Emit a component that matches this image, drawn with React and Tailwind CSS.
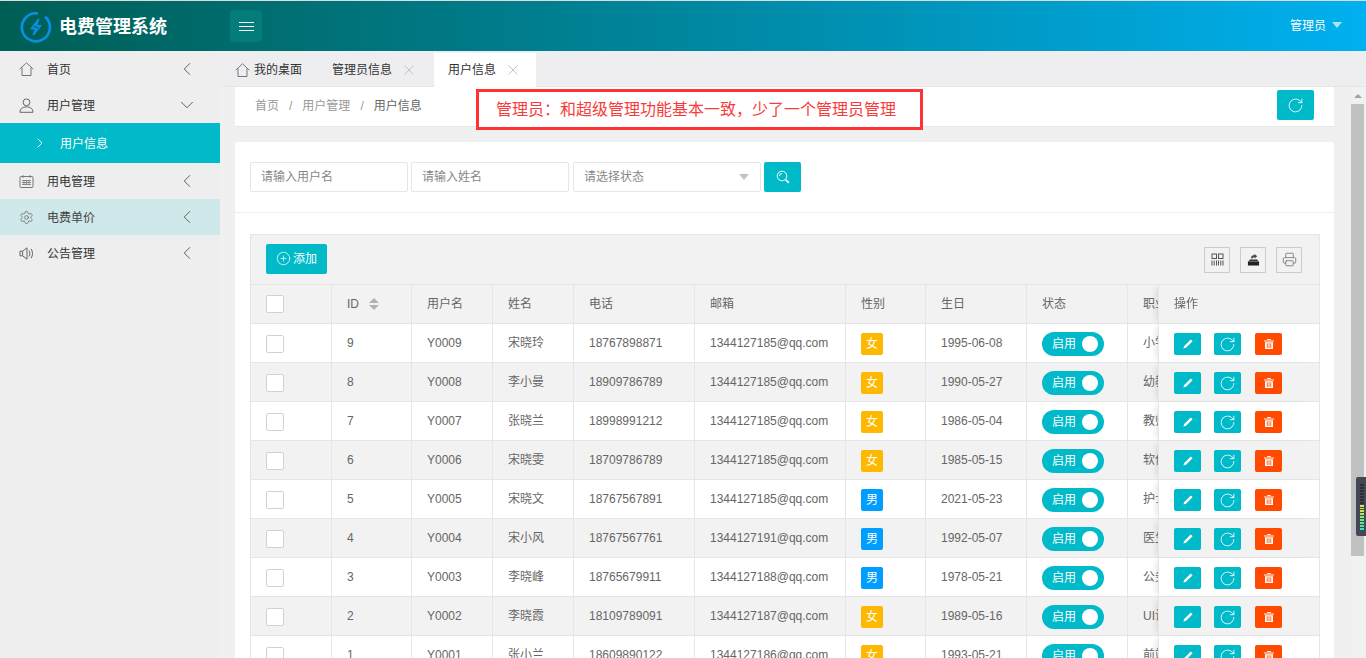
import React from 'react';
import { ChevronLeft, ChevronDown, ChevronRight, Settings, RotateCw, Printer, CirclePlus } from 'lucide-react';

const users = [
  { id: 9, username: 'Y0009', name: '宋晓玲', phone: '18767898871', email: '1344127185@qq.com', sex: '女', birth: '1995-06-08', job: '小学老师' },
  { id: 8, username: 'Y0008', name: '李小曼', phone: '18909786789', email: '1344127185@qq.com', sex: '女', birth: '1990-05-27', job: '幼教老师' },
  { id: 7, username: 'Y0007', name: '张晓兰', phone: '18998991212', email: '1344127185@qq.com', sex: '女', birth: '1986-05-04', job: '教师' },
  { id: 6, username: 'Y0006', name: '宋晓雯', phone: '18709786789', email: '1344127185@qq.com', sex: '女', birth: '1985-05-15', job: '软件工程师' },
  { id: 5, username: 'Y0005', name: '宋晓文', phone: '18767567891', email: '1344127185@qq.com', sex: '男', birth: '2021-05-23', job: '护士' },
  { id: 4, username: 'Y0004', name: '宋小风', phone: '18767567761', email: '1344127191@qq.com', sex: '男', birth: '1992-05-07', job: '医生' },
  { id: 3, username: 'Y0003', name: '李晓峰', phone: '18765679911', email: '1344127188@qq.com', sex: '男', birth: '1978-05-21', job: '公务员' },
  { id: 2, username: 'Y0002', name: '李晓霞', phone: '18109789091', email: '1344127187@qq.com', sex: '女', birth: '1989-05-16', job: 'UI设计师' },
  { id: 1, username: 'Y0001', name: '张小兰', phone: '18609890122', email: '1344127186@qq.com', sex: '女', birth: '1993-05-21', job: '前端工程师' },
];

const columns = [81, 80, 81, 81, 121, 151, 80, 101, 101, 131, 161];

const meter = ['#2b2f38', '#2b2f38', '#2b2f38', '#2b2f38', '#2b2f38', '#2b2f38', '#2b2f38', '#e4e04a', '#dfe24e', '#c9e354', '#a9e65e', '#8ee86c', '#6fe97e', '#55e88f', '#45e5a0', '#3fe3ab'];

function Logo() {
  return (
    <svg width="32" height="32" viewBox="0 0 32 32" fill="none">
      <path d="M11 3.2A14 14 0 1 0 21 3.2" stroke="#0b8fe6" strokeWidth="2.6" strokeLinecap="round" transform="rotate(25 16 16)" />
      <path d="M18.5 8.5 11.5 17.5H16L13.5 23.5 20.5 14.8H16Z" stroke="#0b8fe6" strokeWidth="1.8" strokeLinejoin="round" />
    </svg>
  );
}

function HouseIcon() {
  return (
    <svg width="15" height="14" viewBox="0 0 15 14" fill="none" stroke="#777" strokeWidth="1">
      <path d="M.7 7.2 7.5.8l6.8 6.4" />
      <path d="M3 5.5v8h9v-8" />
    </svg>
  );
}

function UserIcon() {
  return (
    <svg width="15" height="15" viewBox="0 0 15 15" fill="none" stroke="#666" strokeWidth="1">
      <circle cx="7.5" cy="4.3" r="3.4" />
      <path d="M1 14.3c0-3.6 2.6-5.4 6.5-5.4s6.5 1.8 6.5 5.4z" />
    </svg>
  );
}

function SpeakerIcon() {
  return (
    <svg width="15" height="15" viewBox="0 0 15 15" fill="none" stroke="#666" strokeWidth="1">
      <path d="M1 5.2h2.6L8 1.8v11.4L3.6 9.8H1z" />
      <path d="M3.6 5.2v4.6" />
      <path d="M10 4.6c1.1 1.6 1.1 4.2 0 5.8M12 2.8c2 2.6 2 6.8 0 9.4" />
    </svg>
  );
}

function CalendarIcon() {
  return (
    <svg width="15" height="15" viewBox="0 0 15 15" fill="none" stroke="#777" strokeWidth="1">
      <rect x="1" y="2.5" width="13" height="11" rx="1" />
      <path d="M4 1v3M11 1v3M3 6.5h9M3 8.5h9M3 10.5h9M5 6v5M7.5 6v5M10 6v5" strokeWidth="0.8" />
    </svg>
  );
}

function CloseIcon() {
  return (
    <svg width="10" height="10" viewBox="0 0 10 10" fill="none" stroke="#c4c4c4" className="ml-[12px]">
      <path d="M.5.5l9 9M9.5.5l-9 9" />
    </svg>
  );
}

function SearchIcon() {
  return (
    <svg width="14" height="14" viewBox="0 0 14 14" fill="none" stroke="#fff">
      <circle cx="6" cy="6" r="4.8" />
      <path d="M3.5 6A2.5 2.5 0 0 1 6 3.5" />
      <path d="M9.8 9.8l3 3" strokeWidth="1.8" />
    </svg>
  );
}

function ColsIcon() {
  return (
    <svg width="13" height="13" viewBox="0 0 13 13" fill="none" stroke="#555">
      <rect x="1" y="1" width="4.5" height="4.5" />
      <rect x="7.5" y="1" width="4.5" height="4.5" />
      <path d="M1 7.5v5M3.2 7.5v5M5.5 7.5v5M7.5 7.5v5M9.8 7.5v5M12 7.5v5" strokeWidth="1" />
    </svg>
  );
}

function ExportIcon() {
  return (
    <svg width="13" height="13" viewBox="0 0 14 14">
      <path d="M1 9h12v4.5H1z" fill="#222" />
      <path d="M2 8.5 3 7h8l1 1.5z" fill="#333" />
      <path d="M4.5 6V4.5C4.5 3.2 6 2.5 8 2.5V1l3 2.5L8 6V4.5C6.8 4.5 6 5 5.8 6z" fill="#444" />
    </svg>
  );
}

function PencilIcon() {
  return (
    <svg width="12" height="12" viewBox="0 0 12 12" fill="#fff">
      <path d="M8.8 1.4 10.6 3.2 4 9.8 1.4 10.6 2.2 8z" />
    </svg>
  );
}

function TrashIcon() {
  return (
    <svg width="12" height="12" viewBox="0 0 12 12" fill="#fff">
      <path d="M1 2.4h10v1.2H1zM4.2 1h3.6v1H4.2z" />
      <path d="M2 4.2h8V11H2zM3.8 5.2v4.8h.8V5.2zM5.6 5.2v4.8h.8V5.2zM7.4 5.2v4.8h.8V5.2z" fillRule="evenodd" />
    </svg>
  );
}

function NavItem({ icon, label, active, open }) {
  return (
    <div className={`flex h-9 items-center pl-[19px] pr-[22px] text-xs ${active ? 'bg-[#cfe8e9] text-[#444]' : 'text-[#333]'}`}>
      <span className="flex w-[28px] text-[#666]">{icon}</span>
      <span className="mt-[2px] flex-1">{label}</span>
      {open ? <ChevronDown size={22} strokeWidth={1} color="#555" /> : <ChevronLeft size={22} strokeWidth={1} color="#555" />}
    </div>
  );
}

function Tab({ children, active, closable, icon }) {
  return (
    <div className={`flex h-[34px] shrink-0 items-center text-xs text-[#333] ${active ? 'bg-white pl-[14px] pr-[18px]' : 'pr-[20px]'}`}>
      {icon}
      <span>{children}</span>
      {closable && <CloseIcon />}
    </div>
  );
}

function ToolButton({ children }) {
  return (
    <div className="flex h-[26px] w-[26px] items-center justify-center border border-[#ccc]">{children}</div>
  );
}

function ActionButton({ color, children }) {
  return (
    <div className={`flex h-[22px] w-[27px] items-center justify-center rounded-[2px] ${color}`}>{children}</div>
  );
}

function Cell({ children }) {
  return <td className="border-r border-b border-[#e6e6e6] px-[15px] py-0 whitespace-nowrap overflow-hidden">{children}</td>;
}

function HeadCell({ children }) {
  return <th className="border-r border-b border-[#e6e6e6] px-[15px] py-0 text-left font-normal whitespace-nowrap overflow-hidden">{children}</th>;
}

export default function App() {
  return (
    <div className="h-[658px] w-[1366px] overflow-hidden bg-[#f0f0f0] [font-family:'Liberation_Sans','Noto_Sans_CJK_SC',sans-serif]">
      <div className="h-px bg-[#dcdcdc]" />

      {/* header */}
      <div className="flex h-[50px] items-center bg-gradient-to-r from-[#005e54] to-[#00b0f0]">
        <div className="flex w-[230px] items-center pl-[20px] pt-[2px]">
          <Logo />
          <span className="ml-[7px] text-[18px] font-bold text-white">电费管理系统</span>
        </div>
        <div className="flex h-[32px] w-[32px] flex-col items-center justify-center gap-[3px] rounded-[3px] bg-[#047c7a]">
          <span className="h-px w-[15px] bg-white" />
          <span className="h-px w-[15px] bg-white" />
          <span className="h-px w-[15px] bg-white" />
        </div>
        <div className="ml-auto flex items-center pr-[24px] text-xs text-white">
          管理员
          <span className="-mt-[2px] ml-[6px] h-0 w-0 border-x-[5px] border-t-[6px] border-x-transparent border-t-[#a5e6f7]" />
        </div>
      </div>

      <div className="flex h-[607px]">
        {/* sidebar */}
        <div className="w-[220px] shrink-0 bg-[#eeeeee]">
          <NavItem label="首页" icon={<HouseIcon />} />
          <NavItem label="用户管理" icon={<UserIcon />} open />
          <div className="flex h-10 items-center bg-[#00bac9] pl-[32px] text-xs text-white">
            <ChevronRight size={16} strokeWidth={1.4} />
            <span className="ml-[12px] mt-[2px]">用户信息</span>
          </div>
          <NavItem label="用电管理" icon={<CalendarIcon />} />
          <NavItem label="电费单价" icon={<Settings size={15} strokeWidth={1.2} />} active />
          <NavItem label="公告管理" icon={<SpeakerIcon />} />
        </div>

        <div className="relative flex min-w-0 flex-1 flex-col">
          {/* tabs */}
          <div className="flex h-[36px] shrink-0 items-start border-b border-[#e6e6e6] bg-[#eeeef0] pl-[15px] pt-[2px]">
            <Tab icon={<span className="mr-[4px] flex"><HouseIcon /></span>}>
              <span className="mr-[10px] inline-block">我的桌面</span>
            </Tab>
            <Tab closable>管理员信息</Tab>
            <Tab active closable>用户信息</Tab>
          </div>

          <div className="flex min-h-0 flex-1">
            <div className="min-w-0 flex-1 pl-[15px] pr-[17px]">
              {/* breadcrumb */}
              <div className="flex h-[40px] items-start border-b border-[#e6e6e6] bg-white pl-[20px] pr-[20px] pt-[3px] text-xs text-[#999]">
                <div className="flex h-[32px] items-center">
                  <span>首页</span>
                  <span className="mx-[10px]">/</span>
                  <span>用户管理</span>
                  <span className="mx-[10px]">/</span>
                  <span className="text-[#666]">用户信息</span>
                </div>
                <div className="ml-auto flex h-[30px] w-[37px] items-center justify-center rounded-[2px] bg-[#00bac9]">
                  <RotateCw size={17} strokeWidth={1.2} color="#fff" />
                </div>
              </div>

              {/* card */}
              <div className="mt-[15px] rounded-t-[2px] bg-white">
                <div className="flex h-[71px] items-start gap-[3px] border-b border-[#eeeeee] pl-[15px] pt-[20px] text-xs text-[#888]">
                  <div className="flex h-[30px] w-[158px] items-center rounded-[2px] border border-[#e6e6e6] pl-[10px]">请输入用户名</div>
                  <div className="flex h-[30px] w-[158px] items-center rounded-[2px] border border-[#e6e6e6] pl-[10px]">请输入姓名</div>
                  <div className="ml-[1px] flex h-[30px] w-[188px] items-center justify-between rounded-[2px] border border-[#e6e6e6] pl-[10px] pr-[11px]">
                    请选择状态
                    <span className="h-0 w-0 border-x-[5px] border-t-[6px] border-x-transparent border-t-[#c2c2c2]" />
                  </div>
                  <div className="flex h-[30px] w-[37px] items-center justify-center rounded-[2px] bg-[#00bac9]">
                    <SearchIcon />
                  </div>
                </div>

                <div className="pl-[15px] pr-[14px] pt-[21px]">
                  <div className="border border-[#e6e6e6]">
                    {/* toolbar */}
                    <div className="flex h-[50px] items-center justify-between border-b border-[#e6e6e6] bg-[#f2f2f2] pl-[15px] pr-[17px]">
                      <div className="mb-[2px] flex h-[30px] w-[61px] items-center justify-center rounded-[2px] bg-[#00bac9] text-xs text-white">
                        <CirclePlus size={15} strokeWidth={1.2} className="mr-[2px]" />
                        添加
                      </div>
                      <div className="flex gap-[10px]">
                        <ToolButton><ColsIcon /></ToolButton>
                        <ToolButton><ExportIcon /></ToolButton>
                        <ToolButton><Printer size={15} strokeWidth={1.5} color="#808080" /></ToolButton>
                      </div>
                    </div>

                    {/* table */}
                    <div className="overflow-hidden">
                      <table className="table-fixed border-separate border-spacing-0 text-xs text-[#666]" style={{ width: columns.reduce((a, b) => a + b, 0) }}>
                        <colgroup>
                          {columns.map((w, i) => (
                            <col key={i} style={{ width: w }} />
                          ))}
                        </colgroup>
                        <thead>
                          <tr className="h-[39px] bg-[#f2f2f2]">
                            <HeadCell><div className="h-[18px] w-[18px] rounded-[2px] border border-[#d2d2d2] bg-white" /></HeadCell>
                            <HeadCell>
                              <span className="flex items-center">
                                ID
                                <span className="ml-[10px] flex flex-col gap-[2px]">
                                  <span className="h-0 w-0 border-x-[5px] border-b-[5px] border-x-transparent border-b-[#b2b2b2]" />
                                  <span className="h-0 w-0 border-x-[5px] border-t-[5px] border-x-transparent border-t-[#b2b2b2]" />
                                </span>
                              </span>
                            </HeadCell>
                            <HeadCell>用户名</HeadCell>
                            <HeadCell>姓名</HeadCell>
                            <HeadCell>电话</HeadCell>
                            <HeadCell>邮箱</HeadCell>
                            <HeadCell>性别</HeadCell>
                            <HeadCell>生日</HeadCell>
                            <HeadCell>状态</HeadCell>
                            <HeadCell>职业</HeadCell>
                            <th className="sticky right-0 border-b border-l border-[#e6e6e6] bg-[#f2f2f2] px-[15px] py-0 text-left font-normal shadow-[-5px_0_6px_-3px_rgba(0,0,0,0.1)]">操作</th>
                          </tr>
                        </thead>
                        <tbody>
                          {users.map((u, i) => {
                            const rowBg = i % 2 === 1 ? 'bg-[#f2f2f2]' : 'bg-white';
                            return (
                              <tr key={u.id} className={`h-[39px] ${rowBg}`}>
                                <Cell><div className="mt-[2px] h-[18px] w-[18px] rounded-[2px] border border-[#d2d2d2] bg-white" /></Cell>
                                <Cell>{u.id}</Cell>
                                <Cell>{u.username}</Cell>
                                <Cell>{u.name}</Cell>
                                <Cell>{u.phone}</Cell>
                                <Cell>{u.email}</Cell>
                                <Cell>
                                  <span className={`mt-[2px] flex h-[22px] w-[22px] items-center justify-center rounded-[2px] text-white ${u.sex === '女' ? 'bg-[#ffb800]' : 'bg-[#009fff]'}`}>{u.sex}</span>
                                </Cell>
                                <Cell>{u.birth}</Cell>
                                <Cell>
                                  <span className="mt-[2px] flex h-[24px] w-[62px] items-center justify-between rounded-full bg-[#00bac9] pl-[10px] pr-[6px] text-white">
                                    启用
                                    <span className="h-[16px] w-[16px] rounded-full bg-white" />
                                  </span>
                                </Cell>
                                <Cell>{u.job}</Cell>
                                <td className={`sticky right-0 border-b border-l border-[#e6e6e6] px-[15px] py-0 shadow-[-5px_0_6px_-3px_rgba(0,0,0,0.1)] ${rowBg}`}>
                                  <div className="mt-[2px] flex gap-[13px]">
                                    <ActionButton color="bg-[#00bac9]"><PencilIcon /></ActionButton>
                                    <ActionButton color="bg-[#00bac9]"><RotateCw size={17} strokeWidth={1.2} color="#fff" /></ActionButton>
                                    <ActionButton color="ml-px bg-[#ff4a00]"><TrashIcon /></ActionButton>
                                  </div>
                                </td>
                              </tr>
                            );
                          })}
                        </tbody>
                      </table>
                    </div>
                  </div>
                </div>
              </div>
            </div>

            {/* scrollbar */}
            <div className="flex w-[15px] shrink-0 flex-col items-start bg-[#f1f1f1]">
              <span className="ml-[3px] mt-[7px] h-0 w-0 border-x-[4px] border-b-[4px] border-x-transparent border-b-[#a3a3a3]" />
              <div className="mt-[6px] h-[452px] w-[13px] bg-[#c1c1c1]" />
            </div>
          </div>

          {/* annotation */}
          <div className="absolute left-[256px] top-[38px] flex h-[41px] w-[447px] items-center border-[3px] border-[#ff3333] bg-white pl-[17px] text-base text-[#f83c3c]">
            管理员：和超级管理功能基本一致，少了一个管理员管理
          </div>

          {/* meter widget */}
          <div className="absolute right-0 top-[426px] flex h-[59px] w-[10px] flex-col gap-px rounded-l-[2px] bg-[#434854] pb-[6px] pl-[4px] pt-[7px]">
            {meter.map((c, i) => (
              <span key={i} className="h-[2px] w-[4px]" style={{ background: c }} />
            ))}
          </div>
        </div>
      </div>
    </div>
  );
}
